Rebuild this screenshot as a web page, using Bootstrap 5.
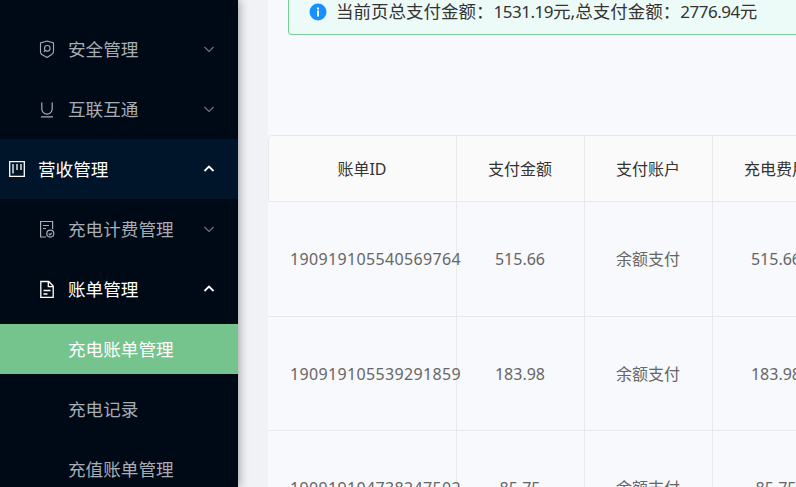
<!DOCTYPE html>
<html lang="zh"><head><meta charset="utf-8">
<link href="https://cdn.jsdelivr.net/npm/bootstrap@5.3.0/dist/css/bootstrap.min.css" rel="stylesheet">
<style>
html,body{height:487px;overflow:hidden}
body{background:#f0f2f5;font-family:"Noto Sans","Noto Sans CJK SC",sans-serif;}
.shell{height:487px;overflow:hidden}
.side{width:238px;flex:none;background:#000a17;box-shadow:2px 0 8px rgba(29,35,41,.35);padding-top:19px;position:relative;z-index:2;color:#a6adb4;font-size:17.6px}
.mi{height:60px;flex:none;padding-left:68px;padding-right:23px}
.mi.open{color:#fff}
.mi.rev{background:#001529;color:#fff;padding-left:38px}
.sub{height:50px;flex:none;margin-top:5px;margin-bottom:5px;padding-left:68px}
.sub.on{background:#75c48e;color:#fff}
.ico{flex:none;margin-left:-30px;margin-right:12px;width:18px;height:18px}
.rev .ico{margin-left:-29px;margin-right:13px;width:16px;height:16px}
.chev{margin-left:auto;width:12px;height:12px;flex:none}
.gutter{width:30px;flex:none}
.main{flex:1;min-width:0;background:#f8f9fc;overflow:hidden}
.notice{margin-left:20px;height:35px;background:#edfbf8;border:1px solid #7bcf94;border-top:0;border-radius:0 0 4px 4px;font-size:17.5px;color:#333;padding-left:20px;padding-bottom:11px;white-space:nowrap;width:620px}
.notice svg{width:18px;height:18px;flex:none;margin-right:9px}
.amt{font-size:17px;letter-spacing:-.48px}
.tbl{margin-top:100px;table-layout:fixed;width:573px;border-collapse:separate;border-spacing:0;font-size:16px;color:#666;margin-bottom:0}
.tbl th,.tbl td{border:0;border-right:1px solid #e9e9e9;border-bottom:1px solid #e9e9e9;background:transparent;text-align:center;vertical-align:middle;padding:0 1px 0 0;font-weight:400;white-space:nowrap;overflow:visible;--bs-table-bg:transparent}
.tbl th{height:67px;background:#fafafa;color:#333;border-top:1px solid #e9e9e9}
.tbl td{height:115px}
.tbl tr:nth-child(2) td{height:114px}
.tbl th:first-child{border-top-left-radius:4px;border-left:1px solid #e9e9e9}
.tbl td:first-child{text-align:left;padding-left:22px;letter-spacing:.35px}
.c1{width:189px}.c2{width:128px}
</style></head><body>
<div class="shell d-flex">
<nav class="side d-flex flex-column">
 <div class="mi d-flex align-items-center"><svg class="ico" viewBox="0 0 18 18" fill="none" stroke="#a6adb4" stroke-width="1.100"><path d="M9 1l6.500 2v8.500c0 1.500-.8 2.300-1.800 3L9 17.500 3.800 14.500c-1-.7-1.300-1.500-1.300-3V3z"/><circle cx="9.300" cy="8.300" r="2.800"/><path d="M7.300 10.300L6 11.800"/></svg>安全管理<svg class="chev" viewBox="0 0 12 12" fill="none" stroke="#6d747c" stroke-width="1.200"><path d="M1.500 4l4.500 4.500L10.500 4"/></svg></div>
 <div class="mi d-flex align-items-center"><svg class="ico" viewBox="0 0 18 18" fill="none" stroke="#a6adb4" stroke-width="1.200"><path d="M3.800 2.500V9a5.200 5.200 0 0 0 10.400 0V2.500M3 16.800h12"/></svg>互联互通<svg class="chev" viewBox="0 0 12 12" fill="none" stroke="#6d747c" stroke-width="1.200"><path d="M1.500 4l4.500 4.500L10.500 4"/></svg></div>
 <div class="mi rev d-flex align-items-center"><svg class="ico" viewBox="0 0 16 16" fill="none" stroke="#fff" stroke-width="1.300"><path d="M.7.700h14.600v14.600H.7zM4 3v9.500M8 3v6M12 3v6"/></svg>营收管理<svg class="chev" viewBox="0 0 12 12" fill="none" stroke="#fff" stroke-width="1.800"><path d="M1.500 8L6 3.500 10.500 8"/></svg></div>
 <div class="mi d-flex align-items-center"><svg class="ico" viewBox="0 0 18 18" fill="none" stroke="#a6adb4" stroke-width="1.200"><path d="M8 17H2.600V1.500h12V9M5 5.500h6M5 8.500h3"/><circle cx="12.300" cy="13.600" r="3.500"/><path d="M10.800 13.600l1.100 1.200 1.900-2"/></svg>充电计费管理<svg class="chev" viewBox="0 0 12 12" fill="none" stroke="#6d747c" stroke-width="1.200"><path d="M1.500 4l4.500 4.500L10.500 4"/></svg></div>
 <div class="mi open d-flex align-items-center"><svg class="ico" viewBox="0 0 18 18" fill="none" stroke="#fff" stroke-width="1.300"><path d="M2.800 1.500h8l4.400 4.500v11.300H2.800zM10.300 1.500v5.200h4.900M5.500 10.500h7M5.500 14h4"/></svg>账单管理<svg class="chev" viewBox="0 0 12 12" fill="none" stroke="#fff" stroke-width="1.800"><path d="M1.500 8L6 3.500 10.500 8"/></svg></div>
 <div class="sub on d-flex align-items-center">充电账单管理</div>
 <div class="sub d-flex align-items-center">充电记录</div>
 <div class="sub d-flex align-items-center">充值账单管理</div>
</nav>
<div class="gutter"></div>
<main class="main">
 <div class="notice d-flex align-items-center"><svg viewBox="0 0 18 18"><circle cx="9" cy="9" r="8.500" fill="#1890ff"/><rect x="8" y="7.500" width="2" height="6" fill="#fff"/><rect x="8" y="4.500" width="2" height="2" fill="#fff"/></svg><span>当前页总支付金额：<span class="amt">1531.19</span>元,总支付金额：<span class="amt">2776.94</span>元</span></div>
 <table class="table tbl">
  <colgroup><col class="c1"><col class="c2"><col class="c2"><col class="c2"></colgroup>
  <thead><tr><th>账单ID</th><th>支付金额</th><th>支付账户</th><th>充电费用</th></tr></thead>
  <tbody>
  <tr><td>190919105540569764</td><td>515.66</td><td>余额支付</td><td>515.66</td></tr>
  <tr><td>190919105539291859</td><td>183.98</td><td>余额支付</td><td>183.98</td></tr>
  <tr><td>190919104738247502</td><td>85.75</td><td>余额支付</td><td>85.75</td></tr>
  </tbody>
 </table>
</main>
</div>
</body></html>
